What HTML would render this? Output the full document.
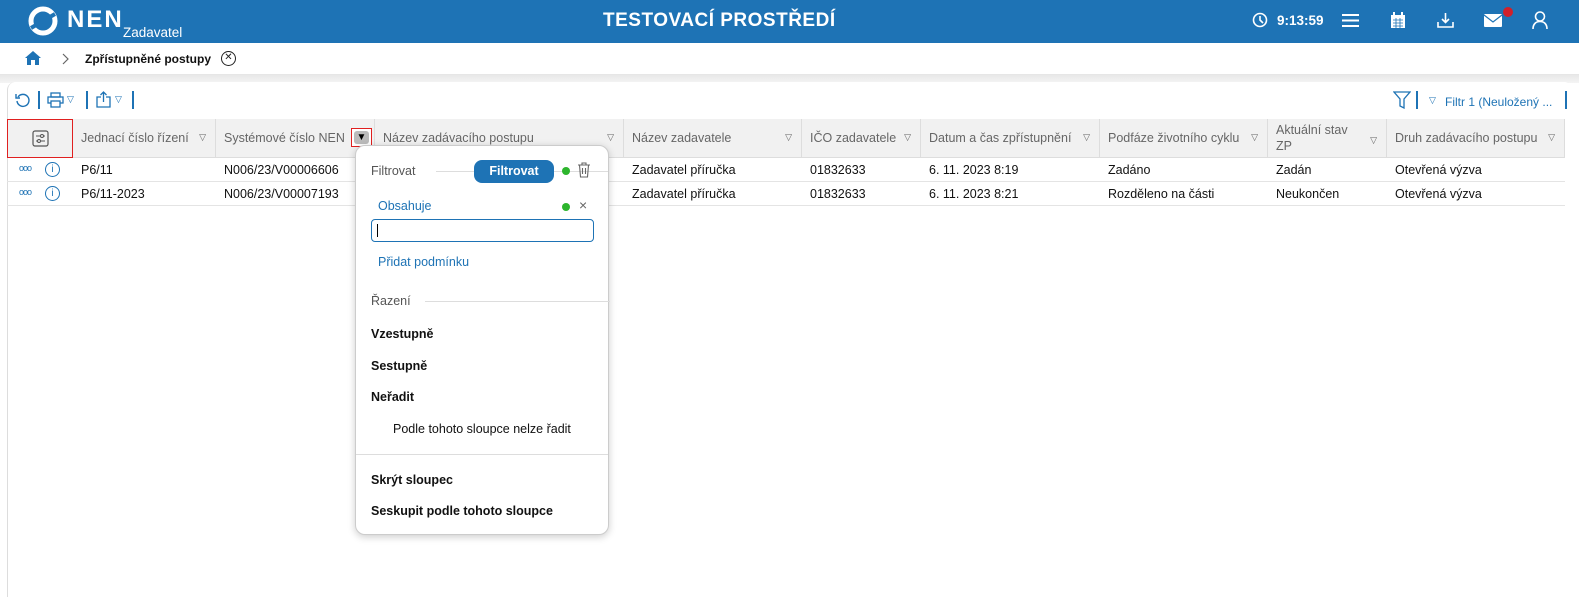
<!DOCTYPE html>
<html><head><meta charset="utf-8"><style>
*{box-sizing:border-box;margin:0;padding:0}
body{width:1579px;height:597px;overflow:hidden;font-family:"Liberation Sans",sans-serif;background:#fff;position:relative;font-size:12.5px;color:#222}
.hdr{position:absolute;left:0;top:0;width:1579px;height:43px;background:#1e73b5;color:#fff}
.abs{position:absolute}
.bc{position:absolute;top:43px;left:0;width:1579px;height:32px;background:#fff;border-bottom:1px solid #e6e6e6}
.gap{position:absolute;top:75px;left:0;width:1579px;height:8px;background:linear-gradient(#e8e8e8,#f4f4f4)}
.card{position:absolute;top:82px;left:7px;width:1565px;height:515px;background:#fff;border-radius:8px 8px 0 0;border-left:1px solid #ddd}
.th{position:absolute;top:119px;height:39px;background:#f1f1f1;border-bottom:1px solid #ddd;border-right:1px solid #ddd;color:#666;font-size:12.5px;padding:0 0 0 8px;display:flex;align-items:center}
.th .t{position:absolute;right:9px;top:13px;font-size:9px;color:#666}
.td{position:absolute;height:24px;line-height:24px;padding-left:8px;font-size:12.5px;color:#111;border-bottom:1px solid #e4e4e4}
.pop{position:absolute;left:355px;top:145px;width:254px;height:390px;background:#fff;border:1px solid #ccc;border-radius:10px;box-shadow:0 2px 8px rgba(0,0,0,.2)}
.pop .b{position:absolute;left:15px;font-weight:bold;font-size:12.5px;color:#111}
</style></head><body>
<div class="hdr">
<svg class="abs" style="left:27px;top:6px" width="34" height="30" viewBox="0 0 34 30"><circle cx="16" cy="15" r="12" fill="none" stroke="#fff" stroke-width="5"/><path d="M4 22 L28 8" stroke="#1e73b5" stroke-width="4"/></svg>
<div class="abs" style="left:67px;top:6px;font-size:24px;font-weight:bold;letter-spacing:2px">NEN</div>
<div class="abs" style="left:123px;top:25px;font-size:13.5px">Zadavatel</div>
<div class="abs" style="left:603px;top:10px;font-size:19px;font-weight:bold;letter-spacing:0.5px">TESTOVACÍ PROSTŘEDÍ</div>
<svg class="abs" style="left:1252px;top:12px" width="16" height="16"><circle cx="8" cy="8" r="6.5" fill="none" stroke="#fff" stroke-width="1.6"/><path d="M8 4v4l3 3" stroke="#fff" stroke-width="1.6" fill="none"/></svg>
<div class="abs" style="left:1277px;top:13px;font-size:13.5px;font-weight:bold">9:13:59</div>
<svg class="abs" style="left:1342px;top:13px" width="17" height="15"><path d="M0 2h17M0 7.5h17M0 13h17" stroke="#fff" stroke-width="2"/></svg>
<svg class="abs" style="left:1390px;top:12px" width="16" height="17"><rect x="1" y="3" width="14" height="13" fill="#fff"/><path d="M4 0v4M12 0v4" stroke="#fff" stroke-width="2"/><path d="M3 8h10M3 11h10M3 14h10M6 6v10M10 6v10" stroke="#1e73b5" stroke-width=".8"/></svg>
<svg class="abs" style="left:1437px;top:12px" width="17" height="17"><path d="M8.5 1v9M5 7l3.5 3.5L12 7M1 10v5h15v-5" stroke="#fff" stroke-width="1.6" fill="none"/></svg>
<svg class="abs" style="left:1484px;top:14px" width="18" height="13"><rect width="18" height="13" rx="1" fill="#fff"/><path d="M0 1l9 7 9-7" stroke="#1e73b5" stroke-width="1.2" fill="none"/></svg>
<div class="abs" style="left:1503px;top:7px;width:10px;height:10px;border-radius:50%;background:#d0202a"></div>
<svg class="abs" style="left:1532px;top:11px" width="16" height="18"><circle cx="8" cy="5.5" r="4.5" fill="none" stroke="#fff" stroke-width="1.6"/><path d="M1 18c0-5 3-7.5 7-7.5s7 2.5 7 7.5" fill="none" stroke="#fff" stroke-width="1.6"/></svg>
</div>
<div class="bc">
<svg class="abs" style="left:24px;top:7px" width="18" height="16"><path d="M9 1L1 8h2v7h4v-5h4v5h4V8h2z" fill="#1e73b5"/></svg>
<svg class="abs" style="left:62px;top:10px" width="8" height="12"><path d="M1 1l5 5-5 5" fill="none" stroke="#666" stroke-width="1.2"/></svg>
<div class="abs" style="left:85px;top:9px;font-weight:bold;font-size:12px;color:#111">Zpřístupněné postupy</div>
<div class="abs" style="left:221px;top:8px;width:15px;height:15px;border:1.5px solid #222;border-radius:50%;font-size:10px;line-height:12px;text-align:center">✕</div>
</div>
<div class="gap"></div>
<div class="card"></div>
<svg class="abs" style="left:15px;top:92px" width="16" height="16"><path d="M3 5a6 6 0 1 1-1 4" fill="none" stroke="#1e73b5" stroke-width="1.4"/><path d="M1 2v4h4" fill="none" stroke="#1e73b5" stroke-width="1.4"/></svg>
<div class="abs" style="left:38px;top:91px;width:1.5px;height:18px;background:#1e73b5"></div>
<svg class="abs" style="left:47px;top:92px" width="17" height="16"><rect x="4" y="1" width="9" height="4" fill="none" stroke="#1e73b5" stroke-width="1.3"/><rect x="1" y="5" width="15" height="6" fill="none" stroke="#1e73b5" stroke-width="1.3"/><rect x="4" y="9" width="9" height="6" fill="#fff" stroke="#1e73b5" stroke-width="1.3"/></svg>
<div class="abs" style="left:67px;top:94px;font-size:9px;color:#1e73b5">▽</div>
<div class="abs" style="left:86px;top:91px;width:1.5px;height:18px;background:#1e73b5"></div>
<svg class="abs" style="left:96px;top:91px" width="15" height="17"><path d="M5 6H1v10h13V6h-4M7.5 11V1M4.5 4l3-3 3 3" fill="none" stroke="#1e73b5" stroke-width="1.3"/></svg>
<div class="abs" style="left:115px;top:94px;font-size:9px;color:#1e73b5">▽</div>
<div class="abs" style="left:132px;top:91px;width:1.5px;height:18px;background:#1e73b5"></div>
<svg class="abs" style="left:1393px;top:91px" width="18" height="18"><path d="M1 1h16l-6 7v9l-4-2V8z" fill="none" stroke="#1e73b5" stroke-width="1.3"/></svg>
<div class="abs" style="left:1416px;top:91px;width:1.5px;height:18px;background:#1e73b5"></div>
<div class="abs" style="left:1429px;top:95px;font-size:9px;color:#1e73b5">▽</div>
<div class="abs" style="left:1445px;top:95px;font-size:12px;color:#1e73b5">Filtr 1 (Neuložený ...</div>
<div class="abs" style="left:1565px;top:91px;width:1.5px;height:18px;background:#1e73b5"></div>
<div class="th" style="left:7px;width:66px;border:1px solid #e02020"><svg style="margin-left:16px" width="17" height="17"><rect x="1" y="1" width="15" height="15" rx="2" fill="none" stroke="#555" stroke-width="1.2"/><path d="M4 6h9M4 11h9" stroke="#555"/><circle cx="10" cy="6" r="1.5" fill="#f1f1f1" stroke="#555"/><circle cx="7" cy="11" r="1.5" fill="#f1f1f1" stroke="#555"/></svg></div>
<div class="th" style="left:73px;width:143px">Jednací číslo řízení<span class="t">▽</span></div>
<div class="th" style="left:216px;width:159px">Systémové číslo NEN</div>
<div class="abs" style="left:351px;top:128px;width:21px;height:19px;border:1px solid #e02020;background:#fff"><div style="margin:2px;width:15px;height:13px;background:#bbb;border-radius:3px;font-size:10px;text-align:center;line-height:13px;color:#000">▼</div></div>
<div class="th" style="left:375px;width:249px">Název zadávacího postupu<span class="t">▽</span></div>
<div class="th" style="left:624px;width:178px">Název zadavatele<span class="t">▽</span></div>
<div class="th" style="left:802px;width:119px">IČO zadavatele<span class="t">▽</span></div>
<div class="th" style="left:921px;width:179px">Datum a čas zpřístupnění<span class="t">▽</span></div>
<div class="th" style="left:1100px;width:168px">Podfáze životního cyklu<span class="t">▽</span></div>
<div class="th" style="left:1268px;width:119px;line-height:16px">Aktuální stav<br>ZP<span class="t">▽</span></div>
<div class="th" style="left:1387px;width:178px">Druh zadávacího postupu<span class="t">▽</span></div>
<div class="td" style="left:7px;top:158px;width:1558px"></div>
<div class="td" style="left:7px;top:182px;width:1558px"></div>
<div class="abs" style="left:19px;top:163px;font-size:9px;color:#1e73b5;letter-spacing:-1px">ooo</div>
<div class="abs" style="left:45px;top:162px;width:15px;height:15px;border:1.3px solid #1e73b5;border-radius:50%;font-size:10px;color:#1e73b5;text-align:center;line-height:13px">i</div>
<div class="abs" style="left:19px;top:187px;font-size:9px;color:#1e73b5;letter-spacing:-1px">ooo</div>
<div class="abs" style="left:45px;top:186px;width:15px;height:15px;border:1.3px solid #1e73b5;border-radius:50%;font-size:10px;color:#1e73b5;text-align:center;line-height:13px">i</div>
<div class="td" style="left:73px;top:158px;border:0">P6/11</div>
<div class="td" style="left:216px;top:158px;border:0">N006/23/V00006606</div>
<div class="td" style="left:624px;top:158px;border:0">Zadavatel příručka</div>
<div class="td" style="left:802px;top:158px;border:0">01832633</div>
<div class="td" style="left:921px;top:158px;border:0">6. 11. 2023 8:19</div>
<div class="td" style="left:1100px;top:158px;border:0">Zadáno</div>
<div class="td" style="left:1268px;top:158px;border:0">Zadán</div>
<div class="td" style="left:1387px;top:158px;border:0">Otevřená výzva</div>
<div class="td" style="left:73px;top:182px;border:0">P6/11-2023</div>
<div class="td" style="left:216px;top:182px;border:0">N006/23/V00007193</div>
<div class="td" style="left:624px;top:182px;border:0">Zadavatel příručka</div>
<div class="td" style="left:802px;top:182px;border:0">01832633</div>
<div class="td" style="left:921px;top:182px;border:0">6. 11. 2023 8:21</div>
<div class="td" style="left:1100px;top:182px;border:0">Rozděleno na části</div>
<div class="td" style="left:1268px;top:182px;border:0">Neukončen</div>
<div class="td" style="left:1387px;top:182px;border:0">Otevřená výzva</div>
<div class="pop">
<div class="abs" style="left:15px;top:18px;color:#555">Filtrovat</div>
<div class="abs" style="left:80px;top:25px;width:172px;height:1px;background:#ddd"></div>
<div class="abs" style="left:118px;top:14px;width:80px;height:23px;background:#1e73b5;border-radius:8px;color:#fff;font-weight:bold;text-align:center;line-height:23px;font-size:12.5px">Filtrovat</div>
<div class="abs" style="left:206px;top:21px;width:8px;height:8px;border-radius:50%;background:#2db52d"></div>
<svg class="abs" style="left:221px;top:16px" width="14" height="16"><path d="M1 3h12M5 3V1h4v2M2.5 3l1 12h7l1-12M5.5 6v6M8.5 6v6" fill="none" stroke="#666" stroke-width="1.1"/></svg>
<div class="abs" style="left:22px;top:53px;color:#1e73b5">Obsahuje</div>
<div class="abs" style="left:206px;top:57px;width:8px;height:8px;border-radius:50%;background:#2db52d"></div>
<div class="abs" style="left:223px;top:51px;color:#666;font-size:14px">×</div>
<div class="abs" style="left:15px;top:73px;width:223px;height:23px;border:1px solid #1e73b5;border-radius:4px"><div style="position:absolute;left:5px;top:4px;width:1px;height:13px;background:#000"></div></div>
<div class="abs" style="left:22px;top:109px;color:#1e73b5">Přidat podmínku</div>
<div class="abs" style="left:15px;top:148px;color:#555">Řazení</div>
<div class="abs" style="left:69px;top:155px;width:185px;height:1px;background:#ddd"></div>
<div class="b" style="top:181px">Vzestupně</div>
<div class="b" style="top:213px">Sestupně</div>
<div class="b" style="top:244px">Neřadit</div>
<div class="abs" style="left:37px;top:276px;color:#111">Podle tohoto sloupce nelze řadit</div>
<div class="abs" style="left:0;top:308px;width:252px;height:1px;background:#ddd"></div>
<div class="b" style="top:327px">Skrýt sloupec</div>
<div class="b" style="top:358px">Seskupit podle tohoto sloupce</div>
</div>
</body></html>
